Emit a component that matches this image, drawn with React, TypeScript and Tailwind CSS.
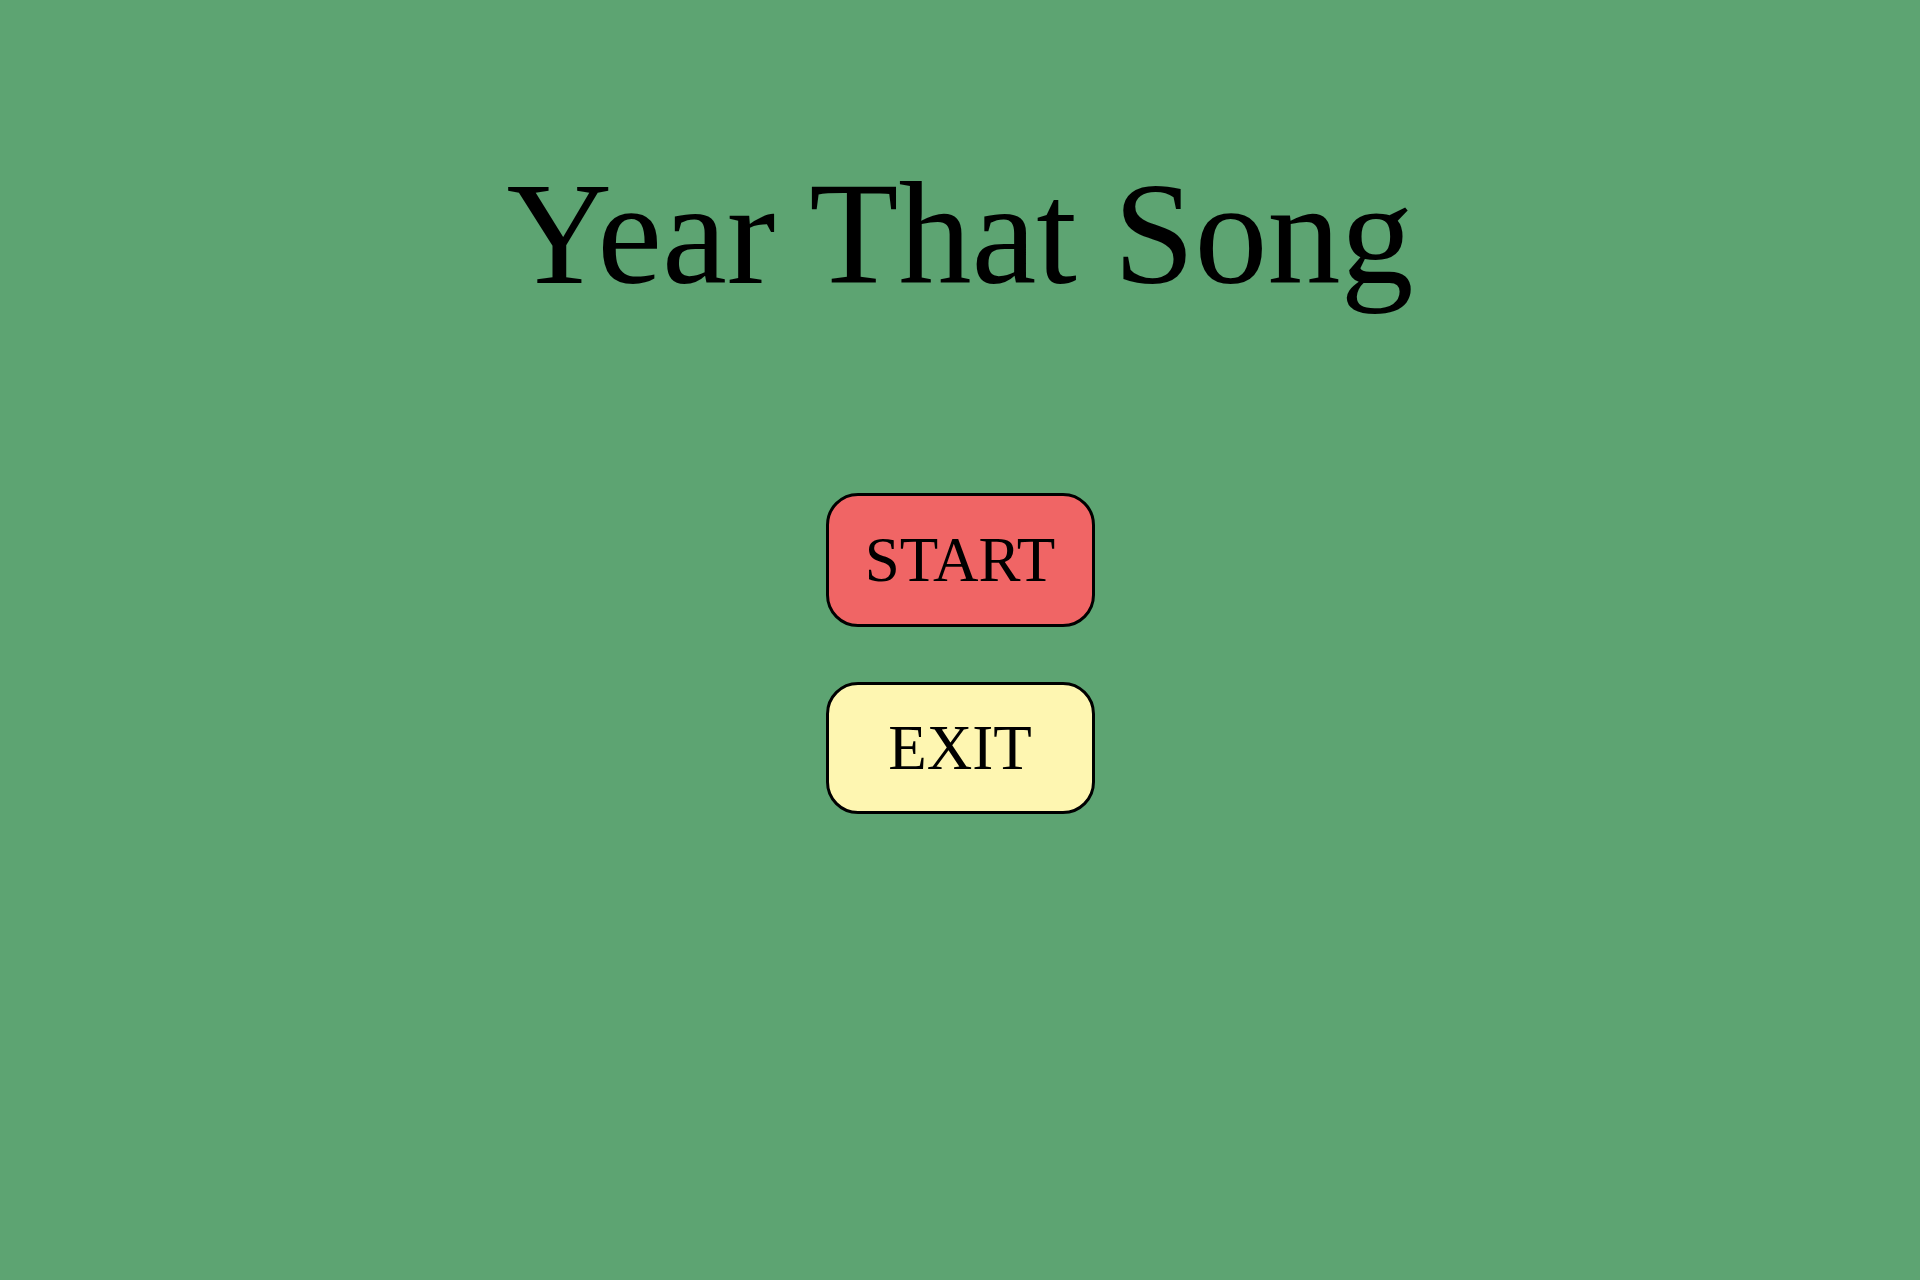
export default function App() {
  return (
    <div
      className="w-[1920px] h-[1280px] bg-[#5da472] flex flex-col items-center"
      style={{ fontFamily: '"Liberation Serif", "Times New Roman", serif' }}
    >
      <h1 className="mt-[161px] text-[146px] leading-none text-black font-normal">Year That Song</h1>
      <div className="mt-[186px] flex flex-col items-center gap-[55px]">
        <button className="w-[269px] h-[134px] rounded-[32px] border-[3px] border-black bg-[#f06565] text-[63px] leading-none text-black flex items-center justify-center">
          START
        </button>
        <button className="w-[269px] h-[132px] rounded-[32px] border-[3px] border-black bg-[#fef6b1] text-[63px] leading-none text-black flex items-center justify-center">
          EXIT
        </button>
      </div>
    </div>
  );
}
